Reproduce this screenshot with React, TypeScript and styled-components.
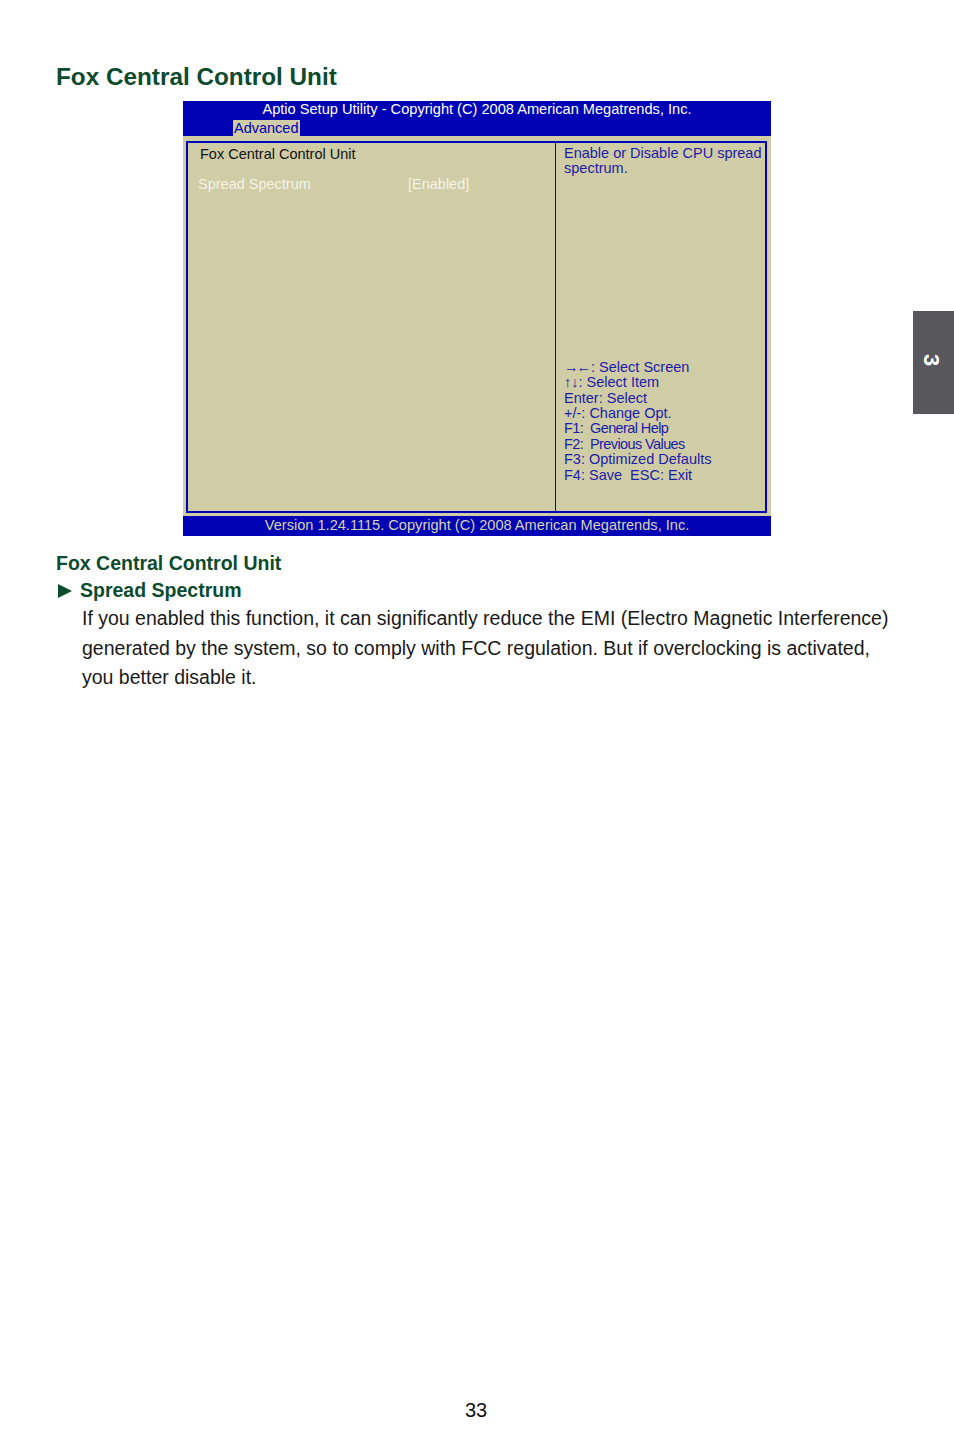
import styled, { createGlobalStyle } from "styled-components";

const GlobalStyle = createGlobalStyle`
  html, body {
    margin: 0;
    padding: 0;
    background: #ffffff;
  }
  body {
    font-family: "Liberation Sans", Arial, sans-serif;
  }
`;

const BLUE = "#0000b4";
const TAN = "#cfcca6";
const HELP_BLUE = "#1c1ca8";
const GREEN = "#0d4b2f";

const Page = styled.div`
  position: relative;
  width: 954px;
  height: 1452px;
  padding: 62px 0 0 56px;
  box-sizing: border-box;
`;

const Title = styled.h1`
  margin: 0;
  font-size: 24.3px;
  line-height: 30px;
  font-weight: bold;
  color: ${GREEN};
`;

const Bios = styled.div`
  margin: 9px 0 0 127px;
  width: 588px;
  display: flex;
  flex-direction: column;
  background: ${TAN};
`;

const Header = styled.div`
  background: ${BLUE};
  height: 35px;
  display: flex;
  flex-direction: column;
`;

const HeaderTitle = styled.div`
  color: #ffffff;
  font-size: 14.6px;
  line-height: 17px;
  text-align: center;
`;

const Tab = styled.span`
  align-self: flex-start;
  margin: 2px 0 0 50px;
  background: ${TAN};
  color: ${BLUE};
  font-size: 14.5px;
  line-height: 16px;
  padding: 0 1px;
`;

const Body = styled.div`
  padding: 5px 4px 3px 3px;
`;

const Frame = styled.div`
  height: 372px;
  box-sizing: border-box;
  border: 2px solid ${BLUE};
  display: grid;
  grid-template-columns: 368px 1fr;
`;

const LeftPane = styled.div`
  border-right: 1px solid ${BLUE};
  padding: 2px 0 0 10px;
  display: flex;
  flex-direction: column;
`;

const PaneTitle = styled.div`
  color: #111111;
  font-size: 14.5px;
  line-height: 18px;
  padding-left: 2px;
`;

const OptionRow = styled.div`
  margin-top: 12px;
  display: grid;
  grid-template-columns: 210px 1fr;
  color: #f6f4e6;
  font-size: 14.5px;
  line-height: 18px;
`;

const RightPane = styled.div`
  padding: 2px 0 0 8px;
  display: flex;
  flex-direction: column;
  color: ${HELP_BLUE};
  font-size: 14.5px;
  line-height: 15.4px;
`;

const HelpText = styled.div`
  padding-top: 1px;
`;

const KeyList = styled.div`
  margin-top: 183px;
  display: flex;
  flex-direction: column;
`;

const KeyLine = styled.div<{ $narrow?: boolean }>`
  white-space: pre;
  letter-spacing: ${({ $narrow }) => ($narrow ? "-0.6px" : "0")};
`;

const Arrows = styled.span`
  letter-spacing: -2px;
  margin-right: 2px;
`;

const Footer = styled.div`
  background: ${BLUE};
  height: 20px;
  color: #d8d4b0;
  font-size: 14.6px;
  line-height: 18px;
  text-align: center;
`;

const SectionHeading = styled.h2`
  margin: 14px 0 0;
  font-size: 19.5px;
  line-height: 27px;
  font-weight: bold;
  color: ${GREEN};
  display: flex;
  align-items: center;
`;

const Arrow = styled.span`
  display: inline-block;
  width: 0;
  height: 0;
  margin: 0 8px 0 2px;
  border-top: 7px solid transparent;
  border-bottom: 7px solid transparent;
  border-left: 14px solid ${GREEN};
`;

const Paragraph = styled.p`
  margin: 0 0 0 26px;
  width: 815px;
  font-size: 19.5px;
  line-height: 29.5px;
  color: #1a1a1a;
`;

const PageNumber = styled.div`
  position: absolute;
  left: 0;
  right: 2px;
  top: 1399px;
  text-align: center;
  font-size: 20px;
  color: #111111;
`;

const ChapterTab = styled.div`
  position: absolute;
  right: 0;
  top: 311px;
  width: 41px;
  height: 103px;
  background: #57575c;
  display: flex;
  align-items: center;
  justify-content: center;
`;

const ChapterNumber = styled.span`
  color: #ffffff;
  font-weight: bold;
  font-size: 22px;
  transform: rotate(90deg);
  margin: -6px 4px 0 0;
`;

const keys: { text: string; narrow?: boolean }[] = [
  { text: "\u2191\u2193: Select Item" },
  { text: "Enter: Select" },
  { text: "+/-: Change Opt." },
  { text: "F1:  General Help", narrow: true },
  { text: "F2:  Previous Values", narrow: true },
  { text: "F3: Optimized Defaults" },
  { text: "F4: Save  ESC: Exit" },
];

export default function App() {
  return (
    <>
      <GlobalStyle />
      <Page>
        <Title>Fox Central Control Unit</Title>
        <Bios>
          <Header>
            <HeaderTitle>Aptio Setup Utility - Copyright (C) 2008 American Megatrends, Inc.</HeaderTitle>
            <Tab>Advanced</Tab>
          </Header>
          <Body>
            <Frame>
              <LeftPane>
                <PaneTitle>Fox Central Control Unit</PaneTitle>
                <OptionRow>
                  <span>Spread Spectrum</span>
                  <span>[Enabled]</span>
                </OptionRow>
              </LeftPane>
              <RightPane>
                <HelpText>
                  Enable or Disable CPU spread
                  <br />
                  spectrum.
                </HelpText>
                <KeyList>
                  <KeyLine>
                    <Arrows>{"\u2192\u2190"}</Arrows>: Select Screen
                  </KeyLine>
                  {keys.map((k) => (
                    <KeyLine key={k.text} $narrow={k.narrow}>
                      {k.text}
                    </KeyLine>
                  ))}
                </KeyList>
              </RightPane>
            </Frame>
          </Body>
          <Footer>Version 1.24.1115. Copyright (C) 2008 American Megatrends, Inc.</Footer>
        </Bios>
        <SectionHeading>Fox Central Control Unit</SectionHeading>
        <SectionHeading as="h3" style={{ marginTop: 0 }}>
          <Arrow />
          Spread Spectrum
        </SectionHeading>
        <Paragraph>
          If you enabled this function, it can significantly reduce the EMI (Electro Magnetic Interference)
          generated by the system, so to comply with FCC regulation. But if overclocking is activated,
          you better disable it.
        </Paragraph>
        <PageNumber>33</PageNumber>
        <ChapterTab>
          <ChapterNumber>3</ChapterNumber>
        </ChapterTab>
      </Page>
    </>
  );
}
